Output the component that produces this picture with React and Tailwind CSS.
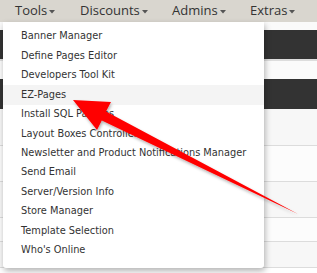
import React from "react";

const items = [
  "Banner Manager",
  "Define Pages Editor",
  "Developers Tool Kit",
  "EZ-Pages",
  "Install SQL Patches",
  "Layout Boxes Controller",
  "Newsletter and Product Notifications Manager",
  "Send Email",
  "Server/Version Info",
  "Store Manager",
  "Template Selection",
  "Who's Online",
];

function Caret() {
  return (
    <svg width="6" height="4" viewBox="0 0 6 4" className="ml-[2px] mt-[2px]">
      <polygon points="0,0 6,0 3,3.5" fill="#555" />
    </svg>
  );
}

export default function App() {
  return (
    <div className="relative w-[317px] h-[273px] overflow-hidden bg-white" style={{ fontFamily: "'DejaVu Sans', Verdana, sans-serif" }}>
      {/* top nav */}
      <div className="h-[22px] bg-[#d9d6cf] flex items-center text-[13px] text-[#333]" style={{ fontFamily: "'Open Sans', sans-serif" }}>
        <div className="flex items-center ml-[15px] w-[65px]">Tools<Caret /></div>
        <div className="flex items-center w-[92px]">Discounts<Caret /></div>
        <div className="flex items-center w-[78px]">Admins<Caret /></div>
        <div className="flex items-center">Extras<Caret /></div>
      </div>
      {/* page content behind */}
      <div className="flex flex-col">
        <div className="h-[8px] bg-[#fafafa]" />
        <div className="h-[31px] bg-[#333333] border-b-2 border-[#dddddd]" />
        <div className="h-[18px] bg-[#fbfbfb]" />
        <div className="h-[30px] bg-[#333333]" />
        <div className="h-[37px] bg-[#f7f7f7] border-b border-[#dcdcdc]" />
        <div className="h-[36px] bg-[#fcfcfc] border-b border-[#dcdcdc]" />
        <div className="h-[36px] bg-[#f7f7f7] border-b border-[#dcdcdc]" />
        <div className="h-[24px] bg-[#fcfcfc] border-b border-[#dcdcdc]" />
        <div className="h-[26px] bg-[#f7f7f7] border-b border-[#dcdcdc]" />
      </div>
      {/* dropdown */}
      <div className="absolute left-[3px] top-[22px] w-[261px] h-[246px] bg-white pt-[5px] shadow-[1px_3px_6px_rgba(0,0,0,0.3)] rounded-b-[3px]">
        {items.map((t) => (
          <div
            key={t}
            className={`h-[19.45px] flex items-center pl-[18px] text-[9.8px] text-[#333] whitespace-nowrap ${t === "EZ-Pages" ? "bg-[#f4f4f4]" : ""}`}
          >
            {t}
          </div>
        ))}
      </div>
      {/* arrow */}
      <svg className="absolute left-0 top-0" width="317" height="273" viewBox="0 0 317 273">
        <defs>
          <filter id="sh" x="-10%" y="-10%" width="130%" height="130%">
            <feDropShadow dx="1" dy="2" stdDeviation="1.5" floodColor="#000" floodOpacity="0.3" />
          </filter>
        </defs>
        <polygon
          points="73,100 111,102 106,111.5 298,214 101.8,120.5 97,130"
          fill="#ff0000"
          filter="url(#sh)"
        />
      </svg>
    </div>
  );
}
